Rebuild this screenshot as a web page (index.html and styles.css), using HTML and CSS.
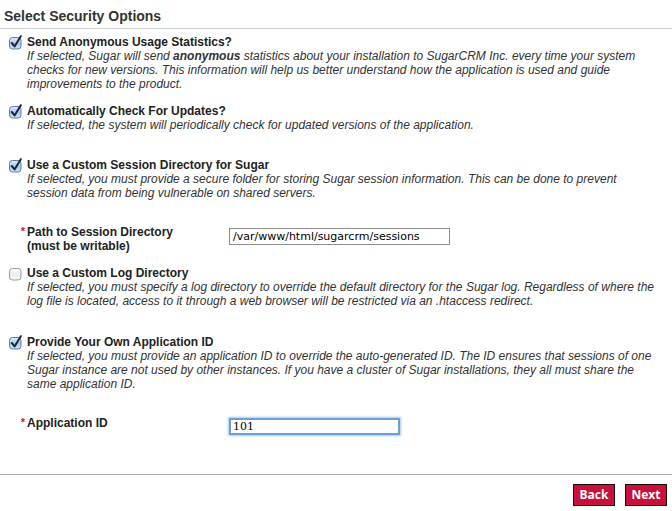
FILE: index.html
```html
<!DOCTYPE html>
<html>
<head>
<meta charset="utf-8">
<link rel="stylesheet" href="styles.css">
</head>
<body>
<div class="page">
  <div class="header"><h2 class="title">Select Security Options</h2></div>
  <div class="options">
    <div class="opt m1">
      <span class="cb"><svg width="15" height="15" viewBox="0 0 15 15"><defs><linearGradient id="g1" x1="0" y1="0" x2="0" y2="1"><stop offset="0" stop-color="#e3eefa"/><stop offset="0.5" stop-color="#a9c8ea"/><stop offset="1" stop-color="#cfe2f6"/></linearGradient></defs><rect x="0.5" y="2.5" width="11.5" height="11.5" rx="3" fill="url(#g1)" stroke="#5a7ea6"/><path d="M2.8 8 L5.6 11.4 L11.8 1.2" stroke="#1b2536" stroke-width="2" fill="none" stroke-linecap="round" stroke-linejoin="round"/></svg></span>
      <div class="txt">
        <div class="ttl">Send Anonymous Usage Statistics?</div>
        <div class="desc">If selected, Sugar will send <b>anonymous</b> statistics about your installation to SugarCRM Inc. every time your system<br>checks for new versions. This information will help us better understand how the application is used and guide<br>improvements to the product.</div>
      </div>
    </div>
    <div class="opt m2">
      <span class="cb"><svg width="15" height="15" viewBox="0 0 15 15"><defs><linearGradient id="g2" x1="0" y1="0" x2="0" y2="1"><stop offset="0" stop-color="#e3eefa"/><stop offset="0.5" stop-color="#a9c8ea"/><stop offset="1" stop-color="#cfe2f6"/></linearGradient></defs><rect x="0.5" y="2.5" width="11.5" height="11.5" rx="3" fill="url(#g2)" stroke="#5a7ea6"/><path d="M2.8 8 L5.6 11.4 L11.8 1.2" stroke="#1b2536" stroke-width="2" fill="none" stroke-linecap="round" stroke-linejoin="round"/></svg></span>
      <div class="txt">
        <div class="ttl">Automatically Check For Updates?</div>
        <div class="desc">If selected, the system will periodically check for updated versions of the application.</div>
      </div>
    </div>
    <div class="opt m3">
      <span class="cb"><svg width="15" height="15" viewBox="0 0 15 15"><defs><linearGradient id="g3" x1="0" y1="0" x2="0" y2="1"><stop offset="0" stop-color="#e3eefa"/><stop offset="0.5" stop-color="#a9c8ea"/><stop offset="1" stop-color="#cfe2f6"/></linearGradient></defs><rect x="0.5" y="2.5" width="11.5" height="11.5" rx="3" fill="url(#g3)" stroke="#5a7ea6"/><path d="M2.8 8 L5.6 11.4 L11.8 1.2" stroke="#1b2536" stroke-width="2" fill="none" stroke-linecap="round" stroke-linejoin="round"/></svg></span>
      <div class="txt">
        <div class="ttl">Use a Custom Session Directory for Sugar</div>
        <div class="desc">If selected, you must provide a secure folder for storing Sugar session information. This can be done to prevent<br>session data from being vulnerable on shared servers.</div>
      </div>
    </div>
    <div class="field m4">
      <span class="req">*</span>
      <div class="lbl">Path to Session Directory<br>(must be writable)</div>
      <input class="inp path" type="text" value="/var/www/html/sugarcrm/sessions">
    </div>
    <div class="opt m5">
      <span class="cb"><svg width="15" height="15" viewBox="0 0 15 15"><defs><linearGradient id="g4" x1="0" y1="0" x2="0" y2="1"><stop offset="0" stop-color="#ffffff"/><stop offset="0.5" stop-color="#ececec"/><stop offset="1" stop-color="#f6f6f6"/></linearGradient></defs><rect x="0.5" y="2.5" width="11.5" height="11.5" rx="3" fill="url(#g4)" stroke="#9a9a9a"/></svg></span>
      <div class="txt">
        <div class="ttl">Use a Custom Log Directory</div>
        <div class="desc">If selected, you must specify a log directory to override the default directory for the Sugar log. Regardless of where the<br>log file is located, access to it through a web browser will be restricted via an .htaccess redirect.</div>
      </div>
    </div>
    <div class="opt m6">
      <span class="cb"><svg width="15" height="15" viewBox="0 0 15 15"><defs><linearGradient id="g5" x1="0" y1="0" x2="0" y2="1"><stop offset="0" stop-color="#e3eefa"/><stop offset="0.5" stop-color="#a9c8ea"/><stop offset="1" stop-color="#cfe2f6"/></linearGradient></defs><rect x="0.5" y="2.5" width="11.5" height="11.5" rx="3" fill="url(#g5)" stroke="#5a7ea6"/><path d="M2.8 8 L5.6 11.4 L11.8 1.2" stroke="#1b2536" stroke-width="2" fill="none" stroke-linecap="round" stroke-linejoin="round"/></svg></span>
      <div class="txt">
        <div class="ttl">Provide Your Own Application ID</div>
        <div class="desc">If selected, you must provide an application ID to override the auto-generated ID. The ID ensures that sessions of one<br>Sugar instance are not used by other instances. If you have a cluster of Sugar installations, they all must share the<br>same application ID.</div>
      </div>
    </div>
    <div class="field m7">
      <span class="req">*</span>
      <div class="lbl">Application ID</div>
      <input class="inp appid" type="text" value="101">
    </div>
  </div>
  <div class="footer">
    <button class="btn">Back</button>
    <button class="btn">Next</button>
  </div>
</div>
</body>
</html>
```

FILE: styles.css
```css
html, body {
  margin: 0;
  padding: 0;
  background: #fff;
}
body {
  font-family: "Liberation Sans", Arial, sans-serif;
  font-size: 12px;
  color: #222;
}
.page {
  width: 672px;
}
.header {
  padding: 8px 4px 4px;
  border-bottom: 1px solid #cfcfcf;
}
.title {
  margin: 0;
  font-size: 14px;
  line-height: 16px;
  font-weight: bold;
  color: #333;
}
.options {
  height: 445px;
  display: flex;
  flex-direction: column;
}
.opt {
  display: grid;
  grid-template-columns: 27px 1fr;
  line-height: 14px;
}
.cb {
  padding-left: 9px;
  display: block;
  height: 14px;
}
.cb svg {
  display: block;
  margin-top: 0px;
}
.ttl {
  font-weight: bold;
  color: #222;
}
.desc {
  font-style: italic;
  color: #333;
  white-space: nowrap;
}
.desc b {
  font-weight: bold;
}
.m1 { margin-top: 6px; }
.m2 { margin-top: 13px; }
.m3 { margin-top: 26px; }
.m4 { margin-top: 25px; }
.m5 { margin-top: 13px; }
.m6 { margin-top: 27px; }
.m7 { margin-top: 25px; }
.field {
  display: grid;
  grid-template-columns: 27px 202px auto;
  align-items: start;
  line-height: 14px;
}
.req {
  justify-self: end;
  padding-right: 2px;
  color: #e0102a;
  font-weight: bold;
  font-size: 11px;
  line-height: 12px;
}
.lbl {
  font-weight: bold;
  color: #222;
}
.inp {
  box-sizing: border-box;
  margin: 0;
  font-family: "DejaVu Sans", sans-serif;
  font-size: 11px;
  color: #000;
  background: #fff;
  outline: none;
}
.path {
  margin-top: 3px;
  width: 221px;
  height: 17px;
  border: 1px solid #8e8e8e;
  padding: 0 3px;
}
.appid {
  margin-top: 2px;
  width: 171px;
  height: 17px;
  border: 2px solid #6d9fd6;
  box-shadow: 0 0 2px 1px #a9c9ec;
  padding: 0 2px;
  font-family: "DejaVu Serif", serif;
}
.footer {
  border-top: 1px solid #aaa;
  display: flex;
  justify-content: flex-end;
  gap: 10px;
  padding: 9px 5px 0 0;
}
.btn {
  height: 22px;
  width: 42px;
  padding: 0;
  margin: 0;
  background: #c8103a;
  border: 1px solid #1a0a0e;
  color: #fff;
  font-family: "Open Sans", sans-serif;
  font-weight: bold;
  font-size: 12px;
  line-height: 20px;
}
```
